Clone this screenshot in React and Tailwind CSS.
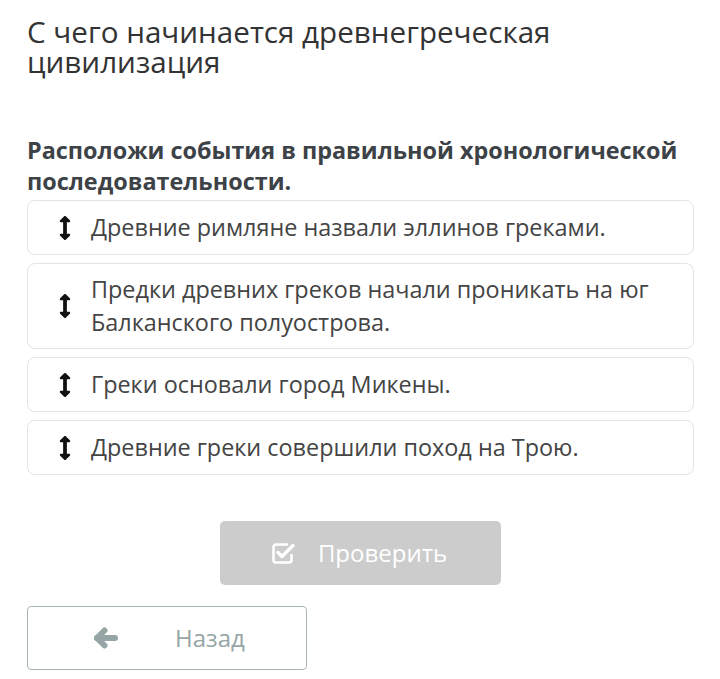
import React from "react";
import { FaArrowsAltV } from "react-icons/fa";

const items = [
  "Древние римляне назвали эллинов греками.",
  "Предки древних греков начали проникать на юг Балканского полуострова.",
  "Греки основали город Микены.",
  "Древние греки совершили поход на Трою.",
];

function CheckIcon() {
  return (
    <svg width="25" height="23" viewBox="0 0 25 23" fill="none" stroke="white" className="-ml-[2px]">
      <path d="M16 2.5 H5 a2.5 2.5 0 0 0 -2.5 2.5 v13 a2.5 2.5 0 0 0 2.5 2.5 h13 a2.5 2.5 0 0 0 2.5 -2.5 v-5" strokeWidth="2.6" strokeLinecap="round" />
      <path d="M7 10.5 L11 14.5 L22 3.5" strokeWidth="3.4" strokeLinecap="round" strokeLinejoin="round" />
    </svg>
  );
}

function ArrowIcon() {
  return (
    <svg width="26" height="22" viewBox="0 0 26 22" fill="none" stroke="#95a5a6" className="ml-[65px]">
      <path d="M4 11 H22" strokeWidth="6" strokeLinecap="round" />
      <path d="M11.5 3.5 L4 11 L11.5 18.5" strokeWidth="6" strokeLinecap="round" strokeLinejoin="round" />
    </svg>
  );
}

export default function App() {
  return (
    <div className="w-[720px] h-[679px] bg-white px-[27px] pt-[17px]" style={{ fontFamily: '"Open Sans", sans-serif' }}>
      <h1 className="text-[29.6px] leading-[30px] text-[#333333] font-normal">
        С чего начинается древнегреческая цивилизация
      </h1>
      <p className="mt-[58px] text-[23.4px] leading-[31px] font-bold text-[#3d4247]">
        Расположи события в правильной хронологической последовательности.
      </p>
      <div className="mt-[3px] flex flex-col gap-[8px] w-[667px]">
        {items.map((t, i) => (
          <div key={i} className="flex items-center border border-[#e4e4e4] rounded-[8px] min-h-[55px] py-[9px]">
            <div className="w-[63px] flex justify-center shrink-0 pl-[10px]">
              <FaArrowsAltV className="text-[#111] w-[12px] h-[24px]" />
            </div>
            <div className="text-[23.4px] leading-[33px] text-[#444444] pr-[16px]">{t}</div>
          </div>
        ))}
      </div>
      <div className="flex justify-center mt-[46px]">
        <button className="w-[281px] h-[64px] bg-[#cccccc] rounded-[5px] flex items-center justify-center gap-[22px] text-white text-[24px]">
          <CheckIcon />
          <span>Проверить</span>
        </button>
      </div>
      <button className="mt-[21px] w-[280px] h-[64px] border border-[#a9b4b7] rounded-[4px] flex items-center text-[#95a5a6] text-[24px]">
        <ArrowIcon />
        <span className="ml-[56px]">Назад</span>
      </button>
    </div>
  );
}
